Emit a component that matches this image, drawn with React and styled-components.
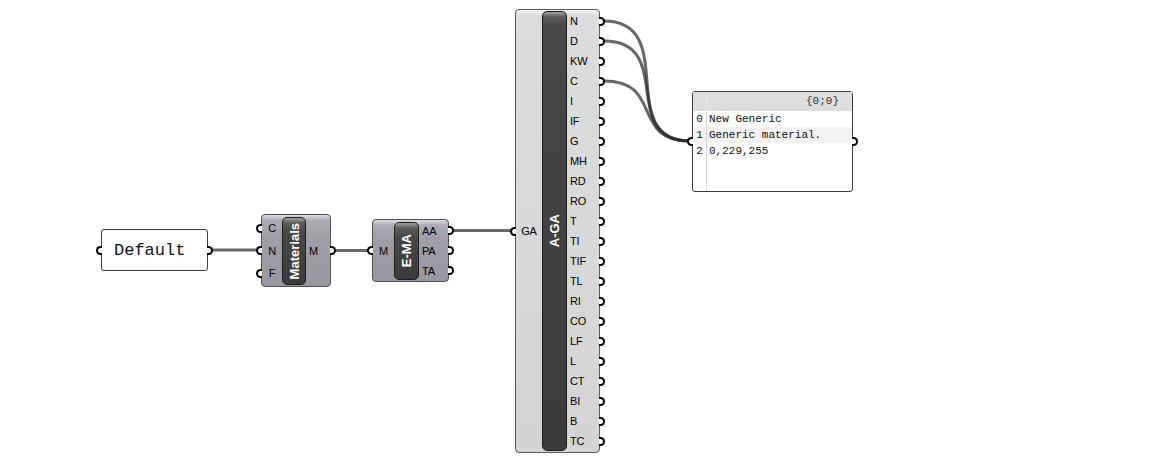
import React from "react";
import styled, { createGlobalStyle, css } from "styled-components";

const GlobalStyle = createGlobalStyle`
  html, body {
    margin: 0;
    padding: 0;
    background: #ffffff;
  }
  body {
    font-family: "Liberation Sans", Arial, sans-serif;
  }
`;

const Canvas = styled.div`
  position: relative;
  width: 1170px;
  height: 460px;
  overflow: hidden;
  background: #ffffff;
`;

const WireLayer = styled.svg`
  position: absolute;
  left: 0;
  top: 0;
  width: 1170px;
  height: 460px;
  pointer-events: none;
`;

// every node sits at its own spot on the canvas
const Node = styled.div`
  position: absolute;
  left: ${(p) => p.$x}px;
  top: ${(p) => p.$y}px;
  width: ${(p) => p.$w}px;
  height: ${(p) => p.$h}px;
  box-sizing: border-box;
  display: flex;
`;

const tones = {
  blue: css`
    background: linear-gradient(
      to bottom,
      #dcdce1 0px,
      #adadb5 5px,
      #9f9fa8 30%,
      #97979f 100%
    );
    border-color: #4e4e56;
  `,
  light: css`
    background: linear-gradient(to bottom, #f2f2f2 0px, #dcdcdc 6px, #d4d4d4 100%);
    border-color: #5a5a5a;
  `,
};

const ComponentBody = styled(Node)`
  border: 1px solid;
  border-radius: 4px;
  ${(p) => tones[p.$tone]}
`;

const Capsule = styled.div`
  flex: none;
  width: ${(p) => p.$w}px;
  margin: ${(p) => p.$m};
  box-sizing: border-box;
  border: 1px solid #1e1e1e;
  border-radius: 5px;
  background: linear-gradient(
    to bottom,
    #a4a4a4 0px,
    #5c5c5c 5px,
    #474747 14px,
    #3b3b3b 100%
  );
  display: flex;
  align-items: center;
  justify-content: center;
`;

const CapsuleTitle = styled.span`
  writing-mode: vertical-rl;
  transform: rotate(180deg);
  color: #ffffff;
  font: bold 13px "Liberation Sans", Arial, sans-serif;
  white-space: nowrap;
`;

const PortColumn = styled.div`
  flex: none;
  width: ${(p) => p.$w}px;
  display: flex;
  flex-direction: column;
  justify-content: center;
`;

const Port = styled.div`
  position: relative;
  flex: none;
  height: ${(p) => p.$h}px;
  display: flex;
  align-items: center;
  justify-content: ${(p) => (p.$side === "in" ? "center" : "flex-start")};
  padding-left: ${(p) => (p.$side === "in" ? 0 : 3)}px;
  font-size: 11px;
  color: #000000;
  letter-spacing: -0.2px;
`;

const Grip = styled.span`
  position: absolute;
  top: 50%;
  width: 6px;
  height: 9px;
  margin-top: -4.5px;
  box-sizing: border-box;
  background: #ffffff;
  border: 2px solid #000000;
  ${(p) =>
    p.$side === "in"
      ? css`
          right: 100%;
          border-right: none;
          border-radius: 5px 0 0 5px;
        `
      : css`
          left: 100%;
          border-left: none;
          border-radius: 0 5px 5px 0;
        `}
`;

const ValueBox = styled(Node)`
  border: 1px solid #3a3a3a;
  border-radius: 3px;
  background: #ffffff;
  align-items: center;
  padding-left: 12px;
  font: 17px "Liberation Mono", "Courier New", monospace;
  color: #111111;
`;

const DataPanel = styled(Node)`
  border: 1px solid #3a3a3a;
  border-radius: 3px;
  background: #ffffff;
  flex-direction: column;
  font: 11px "Liberation Mono", "Courier New", monospace;
  color: #111111;
`;

const PanelLine = styled.div`
  display: grid;
  grid-template-columns: 14px 1fr;
  flex: ${(p) => (p.$fill ? "1" : "none")};
  height: ${(p) => (p.$fill ? "auto" : `${p.$h}px`)};
  line-height: ${(p) => p.$h || 16}px;
  background: ${(p) => p.$bg || "transparent"};
`;

const IndexCell = styled.span`
  text-align: center;
  border-right: 1px solid ${(p) => (p.$head ? "#ececec" : "#d6d6d6")};
`;

const TextCell = styled.span`
  padding-left: 2px;
  text-align: ${(p) => (p.$right ? "right" : "left")};
  padding-right: ${(p) => (p.$right ? 13 : 0)}px;
  white-space: pre;
  color: ${(p) => (p.$head ? "#333" : "#111")};
`;

const components = [
  {
    name: "Materials",
    x: 261,
    y: 214,
    w: 70,
    h: 73,
    tone: "blue",
    cols: [20, 24, 24],
    capMargin: "2px 0 1px",
    rowIn: 22.5,
    rowOut: 22.5,
    inputs: ["C", "N", "F"],
    outputs: ["M"],
  },
  {
    name: "E-MA",
    x: 372,
    y: 219,
    w: 77,
    h: 63,
    tone: "blue",
    cols: [21, 25, 29],
    capMargin: "2px 0 1px",
    rowIn: 20,
    rowOut: 20,
    inputs: ["M"],
    outputs: ["AA", "PA", "TA"],
  },
  {
    name: "A-GA",
    x: 515,
    y: 9,
    w: 85,
    h: 444,
    tone: "light",
    cols: [26, 25, 32],
    capMargin: "1px 0 1px",
    rowIn: 20,
    rowOut: 20,
    inputs: ["GA"],
    outputs: [
      "N", "D", "KW", "C", "I", "IF", "G", "MH", "RD", "RO", "T",
      "TI", "TIF", "TL", "RI", "CO", "LF", "L", "CT", "BI", "B", "TC",
    ],
  },
];

const curve = (x1, y1, x2, y2, k) =>
  `M${x1},${y1} C${x1 + k},${y1} ${x2 - k},${y2} ${x2},${y2}`;

const wires = [
  "M212,250 L258,250",
  "M335,250.5 L373,250.5",
  "M452,230.5 L514,230.5",
  curve(604, 21, 690, 141, 76),
  curve(604, 41, 690, 141, 72),
  curve(604, 81, 690, 141, 60),
];

const panelRows = ["New Generic", "Generic material.", "0,229,255"];

function GhComponent({ c }) {
  return (
    <ComponentBody $x={c.x} $y={c.y} $w={c.w} $h={c.h} $tone={c.tone}>
      <PortColumn $w={c.cols[0]}>
        {c.inputs.map((label) => (
          <Port key={label} $side="in" $h={c.rowIn}>
            <Grip $side="in" />
            {label}
          </Port>
        ))}
      </PortColumn>
      <Capsule $w={c.cols[1]} $m={c.capMargin}>
        <CapsuleTitle>{c.name}</CapsuleTitle>
      </Capsule>
      <PortColumn $w={c.cols[2]}>
        {c.outputs.map((label) => (
          <Port key={label} $side="out" $h={c.rowOut}>
            {label}
            <Grip $side="out" />
          </Port>
        ))}
      </PortColumn>
    </ComponentBody>
  );
}

export default function App() {
  return (
    <>
      <GlobalStyle />
      <Canvas>
        <WireLayer viewBox="0 0 1170 460">
          {wires.map((d, i) => (
            <path
              key={i}
              d={d}
              fill="none"
              stroke="rgba(45,45,45,0.72)"
              strokeWidth="3"
              strokeLinecap="butt"
            />
          ))}
        </WireLayer>

        <ValueBox $x={101} $y={229} $w={107} $h={42}>
          <Grip $side="in" />
          Default
          <Grip $side="out" />
        </ValueBox>

        {components.map((c) => (
          <GhComponent key={c.name} c={c} />
        ))}

        <DataPanel $x={692} $y={91} $w={161} $h={101}>
          <Grip $side="in" />
          <PanelLine $h={19} $bg="#dedede">
            <IndexCell $head />
            <TextCell $right $head>
              {"{0;0}"}
            </TextCell>
          </PanelLine>
          {panelRows.map((row, i) => (
            <PanelLine key={i} $h={16} $bg={i === 1 ? "#f2f2f2" : undefined}>
              <IndexCell>{i}</IndexCell>
              <TextCell>{row}</TextCell>
            </PanelLine>
          ))}
          <PanelLine $fill>
            <IndexCell />
            <TextCell />
          </PanelLine>
          <Grip $side="out" />
        </DataPanel>
      </Canvas>
    </>
  );
}
